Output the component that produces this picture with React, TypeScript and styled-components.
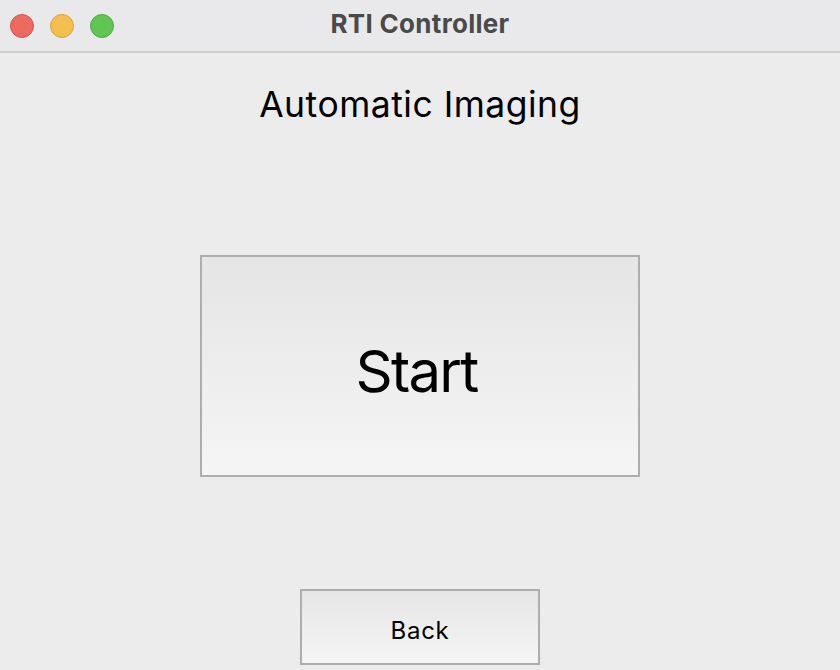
import React from "react";
import styled, { createGlobalStyle } from "styled-components";

const Global = createGlobalStyle`
  html, body { margin: 0; padding: 0; background: #ececec; }
  body { font-family: Inter, "Noto Sans", "Liberation Sans", sans-serif; }
  * { box-sizing: border-box; }
`;

const Window = styled.div`
  width: 840px;
  height: 670px;
  display: flex;
  flex-direction: column;
  background: #ececec;
  overflow: hidden;
`;

const TitleBar = styled.div`
  height: 53px;
  flex: none;
  display: grid;
  grid-template-columns: 1fr auto 1fr;
  align-items: center;
  background: #e9e9eb;
  border-bottom: 2px solid #cfcfcf;
  padding: 0 10px;
`;

const Lights = styled.div`
  display: flex;
  gap: 16px;
  align-items: center;
`;

const Light = styled.span<{ $fill: string; $edge: string }>`
  width: 24px;
  height: 24px;
  border-radius: 50%;
  background: ${(p) => p.$fill};
  border: 1px solid ${(p) => p.$edge};
`;

const Title = styled.div`
  font-size: 26px;
  font-weight: 700;
  color: #4a4a4a;
  letter-spacing: 0.3px;
  padding-bottom: 4px;
`;

const Content = styled.div`
  flex: 1;
  display: flex;
  flex-direction: column;
  align-items: center;
`;

const Heading = styled.h1`
  margin: 28px 0 0;
  font-size: 35.5px;
  font-weight: 400;
  color: #000;
  letter-spacing: 0.5px;
  line-height: 48px;
`;

const Button = styled.button<{ $w: number; $h: number; $fs: number; $ls: number }>`
  width: ${(p) => p.$w}px;
  height: ${(p) => p.$h}px;
  border: 2px solid #adadad;
  background: linear-gradient(#e5e5e5, #f5f5f5);
  font-family: inherit;
  font-size: ${(p) => p.$fs}px;
  letter-spacing: ${(p) => p.$ls}px;
  color: #000;
  padding: 0;
  display: flex;
  align-items: center;
  justify-content: center;
`;

const StartButton = styled(Button)`
  margin-top: 126px;
  padding: 10px 7px 0 0;
`;

const BackButton = styled(Button)`
  margin-top: 112px;
  padding-top: 6px;
`;

export default function App() {
  return (
    <>
      <Global />
      <Window>
        <TitleBar>
          <Lights>
            <Light $fill="#ed6a5e" $edge="#d5554a" />
            <Light $fill="#f5bf4f" $edge="#d9a23a" />
            <Light $fill="#61c554" $edge="#4ea943" />
          </Lights>
          <Title>RTI Controller</Title>
          <div />
        </TitleBar>
        <Content>
          <Heading>Automatic Imaging</Heading>
          <StartButton $w={440} $h={222} $fs={58} $ls={-1.8}>Start</StartButton>
          <BackButton $w={240} $h={76} $fs={24} $ls={0.7}>Back</BackButton>
        </Content>
      </Window>
    </>
  );
}
